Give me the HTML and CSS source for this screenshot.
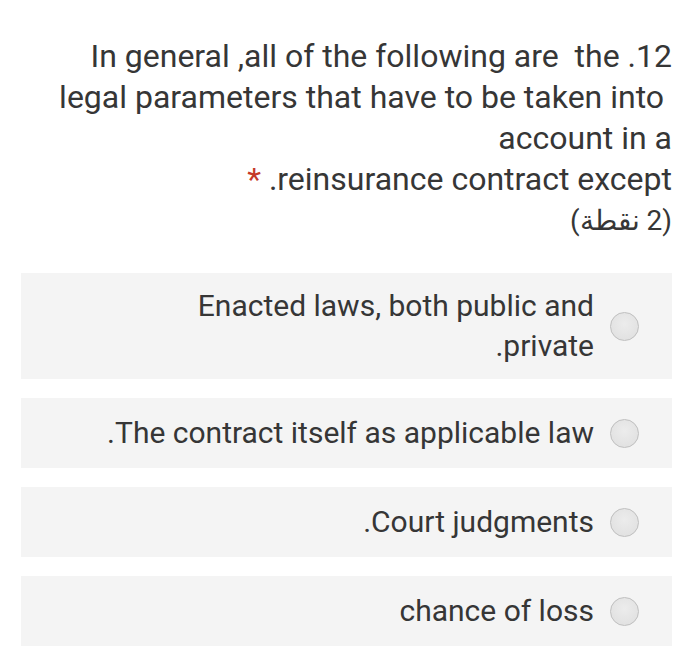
FILE: index.html
```html
<!DOCTYPE html>
<html lang="en">
<head>
<meta charset="utf-8">
<link rel="stylesheet" href="styles.css">
</head>
<body>
<div class="form">
  <div class="question">
    <div class="title">In general ,all of the following are&nbsp; the .12<br>legal parameters that have to be taken into&nbsp;<br>account in a<br><span class="req">*</span> .reinsurance contract except</div>
    <div class="points" dir="rtl">(2 نقطة)</div>
  </div>
  <div class="options">
    <label class="option tall">
      <span class="text">Enacted laws, both public and<br>.private</span>
      <span class="radio"></span>
    </label>
    <label class="option">
      <span class="text">.The contract itself as applicable law</span>
      <span class="radio"></span>
    </label>
    <label class="option">
      <span class="text">.Court judgments</span>
      <span class="radio"></span>
    </label>
    <label class="option">
      <span class="text">chance of loss</span>
      <span class="radio"></span>
    </label>
  </div>
</div>
</body>
</html>
```
FILE: styles.css
```css
html, body {
  margin: 0;
  padding: 0;
  background: #ffffff;
}
body {
  font-family: Roboto, "Noto Sans", sans-serif;
  color: #363636;
}
.form {
  padding: 36px 28px 0 21px;
}
.question {
  text-align: right;
  font-size: 32px;
  line-height: 41px;
}
.req {
  color: #c53929;
}
.points {
  font-size: 28px;
}
.options {
  margin-top: 32px;
  display: flex;
  flex-direction: column;
  gap: 19px;
}
.option {
  background: #f4f4f4;
  display: flex;
  align-items: center;
  justify-content: flex-end;
  gap: 16px;
  height: 70px;
  padding-right: 33px;
  font-size: 30px;
  line-height: 40px;
  text-align: right;
}
.option.tall {
  height: 106px;
}
.radio {
  width: 27px;
  height: 27px;
  border-radius: 50%;
  background: radial-gradient(circle at 50% 40%, #ececec 0%, #dedede 100%);
  border: 1px solid #bfbfbf;
  flex: none;
}
```
